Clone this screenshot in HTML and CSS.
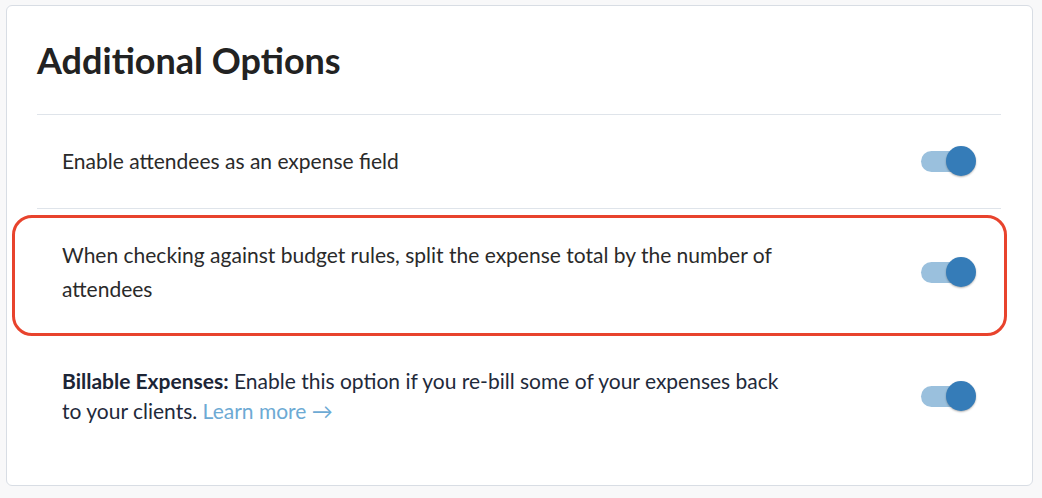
FILE: index.html
```html
<!DOCTYPE html>
<html>
<head>
<meta charset="utf-8">
<link rel="stylesheet" href="styles.css">
</head>
<body>
<div class="card">
  <h1 class="title">Additional Options</h1>
  <div class="list">
    <div class="row row-1">
      <div class="text">Enable attendees as an expense field</div>
      <div class="toggle"><span class="track"></span><span class="knob"></span></div>
    </div>
    <div class="row row-2">
      <div class="text text-tall">When checking against budget rules, split the expense total by the number of attendees</div>
      <div class="toggle"><span class="track"></span><span class="knob"></span></div>
    </div>
    <div class="row row-3">
      <div class="text text-navy"><strong>Billable Expenses:</strong> Enable this option if you re-bill some of your expenses back to your clients. <a class="link" href="#">Learn more →</a></div>
      <div class="toggle"><span class="track"></span><span class="knob"></span></div>
    </div>
  </div>
  <div class="highlight"></div>
</div>
</body>
</html>
```
FILE: styles.css
```css
* { box-sizing: border-box; }
html, body { margin: 0; padding: 0; }
body {
  background: #f8f8f9;
  font-family: Lato, "Open Sans", sans-serif;
  width: 1042px;
  height: 498px;
  overflow: hidden;
  padding: 5px 0 0 6px;
}
.card {
  position: relative;
  width: 1027px;
  height: 481px;
  background: #ffffff;
  border: 1px solid #d8dde4;
  border-radius: 6px;
  padding: 32px 31px 0 30px;
}
.title {
  margin: 0 0 32px 0;
  font-size: 36px;
  line-height: 44px;
  font-weight: 700;
  color: #222222;
}
.list {
  border-top: 1px solid #dfe4ea;
}
.row {
  display: flex;
  align-items: center;
  justify-content: space-between;
  padding: 0 25px;
}
.row-1 {
  padding-top: 31px;
  padding-bottom: 32px;
  border-bottom: 1px solid #dfe4ea;
}
.row-2 {
  padding-top: 29px;
  padding-bottom: 29px;
}
.row-3 {
  padding-top: 31px;
}
.text {
  font-size: 21px;
  line-height: 30px;
  color: #2a2a2a;
  max-width: 730px;
}
.text-tall { line-height: 34px; }
.text-navy { color: #1f2a3b; }
.text-navy strong { font-weight: 700; color: #1c2536; }
.link {
  color: #6daad4;
  text-decoration: none;
}
.toggle {
  position: relative;
  width: 55px;
  height: 30px;
  flex: none;
}
.track {
  position: absolute;
  left: 0;
  top: 5px;
  width: 42px;
  height: 21px;
  border-radius: 11px;
  background: #9ac0dd;
}
.knob {
  position: absolute;
  right: 0;
  top: 0;
  width: 30px;
  height: 30px;
  border-radius: 50%;
  background: #357cb8;
  box-shadow: 0 1px 2px rgba(0, 0, 0, 0.3);
}
.highlight {
  position: absolute;
  left: 5px;
  top: 209px;
  width: 995px;
  height: 121px;
  border: 3px solid #e8432d;
  border-radius: 20px;
  pointer-events: none;
}
```
